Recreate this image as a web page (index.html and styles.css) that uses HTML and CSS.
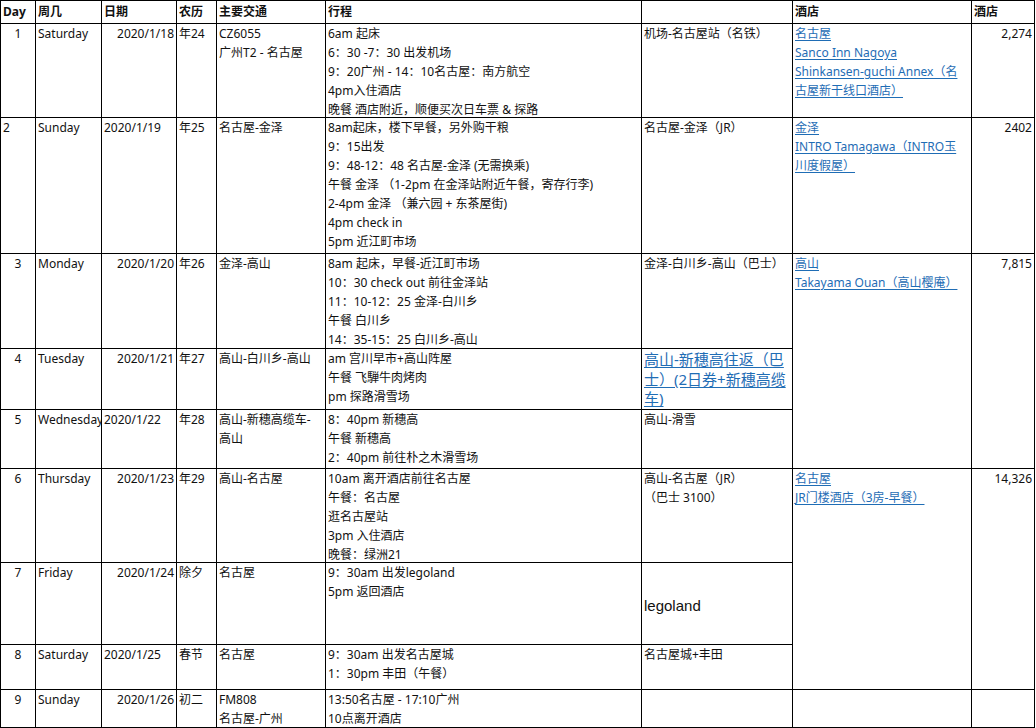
FILE: index.html
```html
<!DOCTYPE html>
<html lang="zh-CN">
<head>
<meta charset="utf-8">
<title>行程</title>
<link rel="stylesheet" href="styles.css">
</head>
<body>
<table class="sheet">
  <colgroup>
    <col class="c-day"><col class="c-week"><col class="c-date"><col class="c-lunar"><col class="c-trans"><col class="c-plan"><col class="c-trans2"><col class="c-hotel"><col class="c-price">
  </colgroup>
  <thead>
    <tr class="rh">
      <th><div class="v">Day</div></th><th><div class="v">周几</div></th><th><div class="v">日期</div></th><th><div class="v">农历</div></th><th><div class="v">主要交通</div></th><th><div class="v">行程</div></th><th></th><th><div class="v">酒店</div></th><th><div class="v">酒店</div></th>
    </tr>
  </thead>
  <tbody>
    <tr class="r1">
      <td class="ctr"><div class="v">1</div></td><td><div class="v">Saturday</div></td><td class="num"><div class="v">2020/1/18</div></td><td><div class="v">年24</div></td>
      <td><div class="v">CZ6055<br>广州T2 - 名古屋</div></td>
      <td><div class="v">6am 起床<br>6：30 -7：30 出发机场<br>9：20广州 - 14：10名古屋：南方航空<br>4pm入住酒店<br>晚餐 酒店附近，顺便买次日车票 &amp; 探路</div></td>
      <td><div class="v">机场-名古屋站（名铁）</div></td>
      <td class="hotel"><div class="v"><a href="#">名古屋</a><br><a href="#">Sanco Inn Nagoya</a><br><a href="#">Shinkansen-guchi Annex（名</a><br><a href="#">古屋新干线口酒店）</a></div></td>
      <td class="num"><div class="v">2,274</div></td>
    </tr>
    <tr class="r2">
      <td><div class="v">2</div></td><td><div class="v">Sunday</div></td><td><div class="v">2020/1/19</div></td><td><div class="v">年25</div></td>
      <td><div class="v">名古屋-金泽</div></td>
      <td><div class="v">8am起床，楼下早餐，另外购干粮<br>9：15出发<br>9：48-12：48 名古屋-金泽 (无需换乘)<br>午餐 金泽 （1-2pm 在金泽站附近午餐，寄存行李)<br>2-4pm 金泽 （兼六园 + 东茶屋街)<br>4pm check in<br>5pm 近江町市场</div></td>
      <td><div class="v">名古屋-金泽（JR）</div></td>
      <td class="hotel"><div class="v"><a href="#">金泽</a><br><a href="#">INTRO Tamagawa（INTRO玉</a><br><a href="#">川度假屋）</a></div></td>
      <td class="num"><div class="v">2402</div></td>
    </tr>
    <tr class="r3">
      <td class="ctr"><div class="v">3</div></td><td><div class="v">Monday</div></td><td class="num"><div class="v">2020/1/20</div></td><td><div class="v">年26</div></td>
      <td><div class="v">金泽-高山</div></td>
      <td><div class="v">8am 起床，早餐-近江町市场<br>10：30 check out 前往金泽站<br>11：10-12：25 金泽-白川乡<br>午餐 白川乡<br>14：35-15：25 白川乡-高山</div></td>
      <td><div class="v">金泽-白川乡-高山（巴士）</div></td>
      <td class="hotel" rowspan="3"><div class="v"><a href="#">高山</a><br><a href="#">Takayama Ouan（高山樱庵）</a></div></td>
      <td class="num" rowspan="3"><div class="v">7,815</div></td>
    </tr>
    <tr class="r4">
      <td class="ctr"><div class="v">4</div></td><td><div class="v">Tuesday</div></td><td class="num"><div class="v">2020/1/21</div></td><td><div class="v">年27</div></td>
      <td><div class="v">高山-白川乡-高山</div></td>
      <td><div class="v">am 宫川早市+高山阵屋<br>午餐 飞騨牛肉烤肉<br>pm 探路滑雪场</div></td>
      <td class="biglink"><div class="v"><a href="#">高山-新穗高往返（巴<br>士）(2日券+新穗高缆<br>车)</a></div></td>
    </tr>
    <tr class="r5">
      <td class="ctr"><div class="v">5</div></td><td class="clip"><div class="v">Wednesday</div></td><td><div class="v">2020/1/22</div></td><td><div class="v">年28</div></td>
      <td><div class="v">高山-新穗高缆车-<br>高山</div></td>
      <td><div class="v">8：40pm 新穗高<br>午餐 新穗高<br>2：40pm 前往朴之木滑雪场</div></td>
      <td><div class="v">高山-滑雪</div></td>
    </tr>
    <tr class="r6">
      <td class="ctr"><div class="v">6</div></td><td><div class="v">Thursday</div></td><td class="num"><div class="v">2020/1/23</div></td><td><div class="v">年29</div></td>
      <td><div class="v">高山-名古屋</div></td>
      <td><div class="v">10am 离开酒店前往名古屋<br>午餐：名古屋<br>逛名古屋站<br>3pm 入住酒店<br>晚餐：绿洲21</div></td>
      <td><div class="v">高山-名古屋（JR）<br>（巴士 3100）</div></td>
      <td class="hotel" rowspan="3"><div class="v"><a href="#">名古屋</a><br><a href="#">JR门楼酒店（3房-早餐）</a></div></td>
      <td class="num" rowspan="3"><div class="v">14,326</div></td>
    </tr>
    <tr class="r7">
      <td class="ctr"><div class="v">7</div></td><td><div class="v">Friday</div></td><td class="num"><div class="v">2020/1/24</div></td><td><div class="v">除夕</div></td>
      <td><div class="v">名古屋</div></td>
      <td><div class="v">9：30am 出发legoland<br>5pm 返回酒店</div></td>
      <td class="lego"><div class="v">legoland</div></td>
    </tr>
    <tr class="r8">
      <td class="ctr"><div class="v">8</div></td><td><div class="v">Saturday</div></td><td><div class="v">2020/1/25</div></td><td><div class="v">春节</div></td>
      <td><div class="v">名古屋</div></td>
      <td><div class="v">9：30am 出发名古屋城<br>1：30pm 丰田（午餐）</div></td>
      <td><div class="v">名古屋城+丰田</div></td>
    </tr>
    <tr class="r9">
      <td class="ctr"><div class="v">9</div></td><td><div class="v">Sunday</div></td><td class="num"><div class="v">2020/1/26</div></td><td><div class="v">初二</div></td>
      <td><div class="v">FM808<br>名古屋-广州</div></td>
      <td><div class="v">13:50名古屋 - 17:10广州<br>10点离开酒店</div></td>
      <td></td><td></td><td></td>
    </tr>
  </tbody>
</table>
</body>
</html>
```

FILE: styles.css
```css
html, body {
  margin: 0;
  padding: 0;
  background: #ffffff;
}

body {
  font-family: "Noto Sans", "Noto Sans CJK SC", sans-serif;
  font-size: 12px;
  color: #111111;
}

.sheet {
  border-collapse: collapse;
  table-layout: fixed;
  width: 1035px;
}

.c-day { width: 35px; }
.c-week { width: 66px; }
.c-date { width: 75px; }
.c-lunar { width: 40px; }
.c-trans { width: 109px; }
.c-plan { width: 316px; }
.c-trans2 { width: 151px; }
.c-hotel { width: 179px; }
.c-price { width: 63px; }

.sheet th,
.sheet td {
  border: 1px solid #000000;
  padding: 0 2px;
  vertical-align: top;
  text-align: left;
  line-height: 19px;
  white-space: nowrap;
  overflow: hidden;
}

/* content never stretches a row: rows keep the sheet's own heights */
.v {
  height: 0;
  overflow: visible;
}

.sheet th {
  font-weight: 700;
  padding-top: 1px;
}

.rh { height: 23px; }
.r1 { height: 94px; }
.r2 { height: 136px; }
.r3 { height: 95px; }
.r4 { height: 61px; }
.r5 { height: 59px; }
.r6 { height: 94px; }
.r7 { height: 82px; }
.r8 { height: 45px; }
.r9 { height: 38px; }

.sheet td.ctr { text-align: center; }
.sheet td.num { text-align: right; }

.hotel a,
.biglink a {
  color: #1f6db5;
  text-decoration: underline;
  text-underline-offset: 2px;
}

.sheet td.biglink {
  font-size: 15px;
  line-height: 19.5px;
  padding-top: 1px;
}

.sheet td.lego {
  font-family: "Liberation Sans", "Noto Sans CJK SC", sans-serif;
  font-size: 15px;
  padding-top: 33px;
}
```
